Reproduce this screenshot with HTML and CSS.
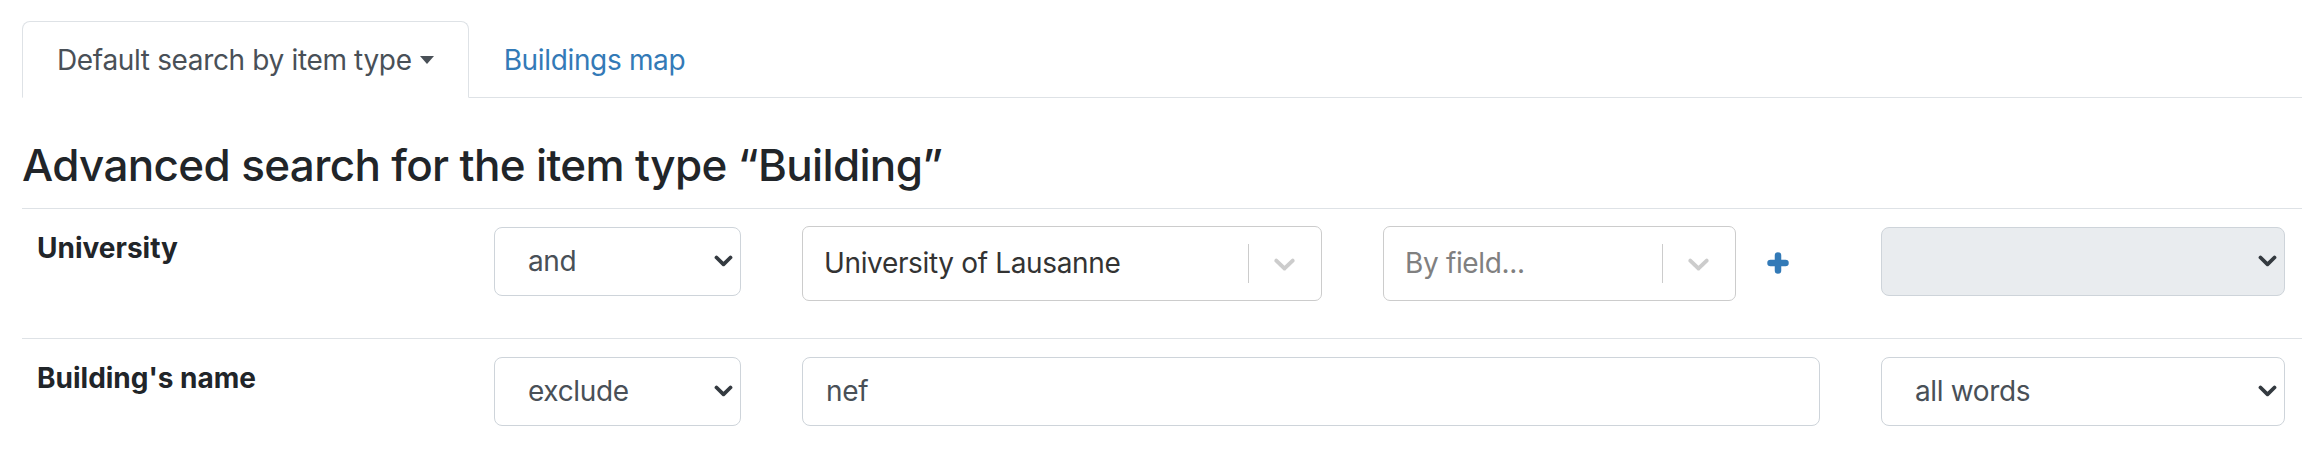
FILE: index.html
```html
<!DOCTYPE html>
<html lang="en">
<head>
<meta charset="utf-8">
<title>Advanced search</title>
<link rel="stylesheet" href="styles.css">
</head>
<body>
<div class="page">
  <ul class="tabs">
    <li class="tab active">Default search by item type<span class="caret"></span></li>
    <li class="tab"><a href="#">Buildings map</a></li>
  </ul>

  <h3 class="title">Advanced search for the item type “Building”</h3>

  <div class="rows">
    <div class="row">
      <div class="label">University</div>
      <div class="select">
        <span>and</span>
        <svg class="chev" viewBox="0 0 19 12" width="19" height="12"><path d="M2.5 2.5 L9.5 9.3 L16.5 2.5"/></svg>
      </div>
      <div class="value">
        <div class="rs rs-uni">
          <span class="rs-main">University of Lausanne</span>
          <span class="rs-sep"></span>
          <span class="rs-ind"><svg viewBox="0 0 20 20"><path d="M4.516 7.548c0.436-0.446 1.043-0.481 1.576 0l3.908 3.747 3.908-3.747c0.533-0.481 1.141-0.446 1.574 0 0.436 0.445 0.408 1.197 0 1.615-0.406 0.418-4.695 4.502-4.695 4.502-0.217 0.223-0.502 0.335-0.787 0.335s-0.57-0.112-0.789-0.335c0 0-4.287-4.084-4.695-4.502s-0.436-1.17 0-1.615z"/></svg></span>
        </div>
        <div class="rs rs-field">
          <span class="rs-main placeholder">By field...</span>
          <span class="rs-sep"></span>
          <span class="rs-ind"><svg viewBox="0 0 20 20"><path d="M4.516 7.548c0.436-0.446 1.043-0.481 1.576 0l3.908 3.747 3.908-3.747c0.533-0.481 1.141-0.446 1.574 0 0.436 0.445 0.408 1.197 0 1.615-0.406 0.418-4.695 4.502-4.695 4.502-0.217 0.223-0.502 0.335-0.787 0.335s-0.57-0.112-0.789-0.335c0 0-4.287-4.084-4.695-4.502s-0.436-1.17 0-1.615z"/></svg></span>
        </div>
        <div class="plus">
          <svg viewBox="0 0 22 22" width="22" height="22"><path d="M11 3.5v15M3.5 11h15"/></svg>
        </div>
      </div>
      <div class="select disabled">
        <span></span>
        <svg class="chev" viewBox="0 0 19 12" width="19" height="12"><path d="M2.5 2.5 L9.5 9.3 L16.5 2.5"/></svg>
      </div>
    </div>

    <div class="row">
      <div class="label">Building's name</div>
      <div class="select">
        <span>exclude</span>
        <svg class="chev" viewBox="0 0 19 12" width="19" height="12"><path d="M2.5 2.5 L9.5 9.3 L16.5 2.5"/></svg>
      </div>
      <div class="value">
        <input class="input" type="text" value="nef">
      </div>
      <div class="select">
        <span>all words</span>
        <svg class="chev" viewBox="0 0 19 12" width="19" height="12"><path d="M2.5 2.5 L9.5 9.3 L16.5 2.5"/></svg>
      </div>
    </div>
  </div>
</div>
</body>
</html>
```

FILE: styles.css
```css
html, body {
  margin: 0;
  background: #fff;
}

body {
  font-family: Inter, "Noto Sans", "Liberation Sans", sans-serif;
  font-size: 28px;
  line-height: 1.5;
  letter-spacing: -0.35px;
  color: #212529;
}

.page {
  padding: 21px 16px 0 22px;
}

/* Tabs */
.tabs {
  display: flex;
  list-style: none;
  margin: 0;
  padding: 0;
  border-bottom: 1px solid #dee2e6;
}

.tab {
  display: flex;
  align-items: center;
  padding: 17px 34px 16px 34px;
  border: 1px solid transparent;
  border-radius: 8px 8px 0 0;
  margin-bottom: -1px;
}

.tab.active {
  border-color: #dee2e6 #dee2e6 #fff;
  background: #fff;
  color: #495057;
}

.tab a {
  color: #337ab7;
  text-decoration: none;
}

.caret {
  width: 0;
  height: 0;
  margin-left: 8px;
  border-left: 7px solid transparent;
  border-right: 7px solid transparent;
  border-top: 8px solid #495057;
}

/* Heading */
.title {
  margin: 41px 0 16px;
  font-size: 44px;
  font-weight: 500;
  line-height: 1.2;
  letter-spacing: -0.65px;
  color: #212529;
}

/* Rows */
.row {
  display: grid;
  grid-template-columns: 396px 247px 1018px 404px;
  column-gap: 61px;
  align-items: start;
  padding: 18px 17px 37px 15px;
  border-top: 1px solid #dee2e6;
}

.label {
  font-weight: 700;
  line-height: 42px;
  letter-spacing: 0;
  color: #212529;
}

.select {
  box-sizing: border-box;
  height: 69px;
  display: flex;
  align-items: center;
  justify-content: space-between;
  padding: 0 7px 0 33px;
  border: 1px solid #ced4da;
  border-radius: 8px;
  background: #fff;
  color: #495057;
}

.select.disabled {
  background: #e9ecef;
}

.chev path {
  fill: none;
  stroke: #343a40;
  stroke-width: 3.8;
  stroke-linecap: round;
  stroke-linejoin: round;
}

.value {
  display: flex;
  align-items: flex-start;
}

.rs {
  box-sizing: border-box;
  height: 75px;
  margin-top: -1px;
  display: flex;
  align-items: center;
  border: 1px solid #ccc;
  border-radius: 7px;
  background: #fff;
}

.rs-uni {
  width: 520px;
}

.rs-field {
  width: 353px;
  margin-left: 61px;
}

.rs-main {
  flex: 1;
  padding-left: 21px;
  color: #333;
  white-space: nowrap;
  overflow: hidden;
}

.rs-main.placeholder {
  color: #808080;
}

.rs-sep {
  align-self: stretch;
  width: 1px;
  margin: 17px 0;
  background: #ccc;
}

.rs-ind {
  display: flex;
  padding: 0 19px 0 18px;
}

.rs-ind svg {
  width: 35px;
  height: 35px;
  fill: #ccc;
}

.plus {
  flex: 1;
  height: 75px;
  margin-top: -1px;
  display: flex;
  align-items: center;
  justify-content: center;
}

.plus path {
  fill: none;
  stroke: #337ab7;
  stroke-width: 6.5;
  stroke-linecap: round;
}

.input {
  box-sizing: border-box;
  width: 100%;
  height: 69px;
  margin: 0;
  padding: 0 23px;
  border: 1px solid #ced4da;
  border-radius: 8px;
  font: inherit;
  letter-spacing: inherit;
  color: #495057;
  background: #fff;
  outline: none;
}
```
